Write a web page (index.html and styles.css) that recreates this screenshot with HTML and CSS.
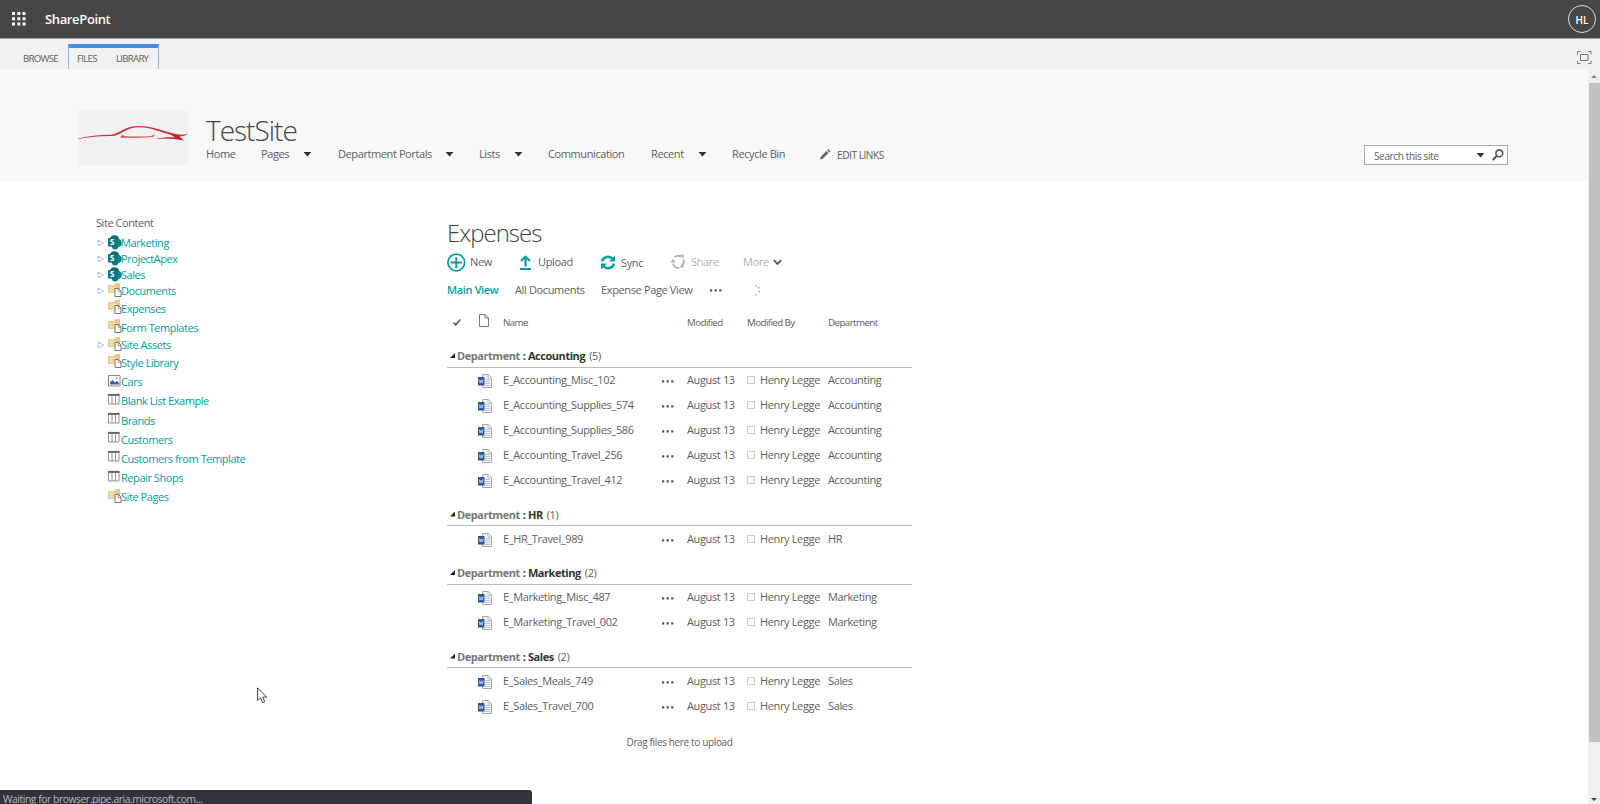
FILE: index.html
```html
<!DOCTYPE html>
<html lang="en">
<head>
    <meta charset="UTF-8">
    <meta name="viewport" content="width=device-width, initial-scale=1.0">
    <title>Expenses - TestSite</title>
    <link rel="stylesheet" href="styles.css">
</head>
<body>
    <!-- Shared icons -->
    <svg class="icon-defs" width="0" height="0">
        <symbol id="i-site" viewBox="0 0 14 15">
            <circle cx="6.500" cy="5" r="4.800" fill="#036c70"/>
            <circle cx="9.800" cy="8" r="4" fill="#078286"/>
            <circle cx="7" cy="11" r="3.400" fill="#067a7e"/>
            <rect x="0" y="3" width="8.500" height="8.500" rx="0.800" fill="#03787c"/>
            <text x="4.200" y="10.200" text-anchor="middle" font-size="8.500" font-weight="700" fill="#fff">S</text>
        </symbol>
        <symbol id="i-lib" viewBox="0 0 14 15">
            <path d="M0 2h6l1.500-2H12v10H0z" fill="#edc88c"/>
            <path d="M2.500 4h5v4h-5z" fill="#f0cf98" stroke="#f9ebd2" stroke-width=".8"/>
            <path d="M7 5.500h3.600L13 8v5.500H7z" fill="#fff" stroke="#777" stroke-width="1"/>
            <path d="M10.300 5.500v2.800H13" fill="none" stroke="#777" stroke-width=".8"/>
        </symbol>
        <symbol id="i-list" viewBox="0 0 14 15">
            <path d="M.5 1.500h10.500v9.500H.5zM4 3v8M7.500 3v8" fill="#fff" stroke="#888" stroke-width=".9"/>
            <path d="M0 1.900h11.500" stroke="#666" stroke-width="2"/>
        </symbol>
        <symbol id="i-pic" viewBox="0 0 14 15">
            <path d="M.5 1.500h11.500v10.500H.5z" fill="#fff" stroke="#888" stroke-width="1"/>
            <path d="M2 10.500V8l2.500-2L7 8.500 9 7l2 2v1.500z" fill="#2f659f"/>
            <circle cx="8.800" cy="4.300" r="1.100" fill="#eda04d"/>
        </symbol>
        <symbol id="i-word" viewBox="0 0 14 14">
            <path d="M4.500.5h6l3 3v10h-9z" fill="#f5f5f5" stroke="#a8a8a8" stroke-width="1"/>
            <path d="M10 .5v3.400h3.500" fill="#fff" stroke="#a8a8a8" stroke-width=".8"/>
            <path d="M7 5.500h5M7 7.500h5M7 9.500h5M7 11.500h5" stroke="#b0b4ba" stroke-width=".8"/>
            <path d="M0 3h6.500v8.500H0z" fill="#2b5797"/>
            <path d="M1.300 5.500l.8 3.600 1.100-3.200 1.100 3.200.8-3.600" fill="none" stroke="#c3d2e8" stroke-width=".9"/>
        </symbol>
        <symbol id="i-dots" viewBox="0 0 12 3">
            <path d="M0 .3h2.200v2.200H0zM4.600.3h2.200v2.200H4.600zM9.200.3h2.200v2.200H9.200z" fill="#555"/>
        </symbol>
    </svg>

    <header class="suite-bar">
        <svg class="waffle" width="14" height="14" viewBox="0 0 14 14" fill="#fff">
            <path d="M0 0h3v3H0zM5.300 0h3v3h-3zM10.600 0h3v3h-3zM0 5.300h3v3H0zM5.300 5.300h3v3h-3zM10.600 5.300h3v3h-3zM0 10.600h3v3H0zM5.300 10.600h3v3h-3zM10.600 10.600h3v3h-3z"/>
        </svg>
        <span class="suite-name">SharePoint</span>
        <span class="avatar">HL</span>
    </header>

    <div class="ribbon">
        <span class="tab browse">BROWSE</span>
        <div class="tab-group">
            <span class="tab files">FILES</span>
            <span class="tab library">LIBRARY</span>
        </div>
        <svg class="focus-icon" width="15" height="13" viewBox="0 0 15 13" fill="none" stroke="#777">
            <path d="M.5 3.500v-3h3M11 .5h3v3M14 9.500v3h-3M3.500 12.500h-3v-3M3.500 3.500h7.500v6H3.500z"/>
        </svg>
    </div>

    <div class="workspace">
        <div class="page">
            <div class="site-header">
                <svg class="logo" width="110" height="54" viewBox="0 0 110 54">
                    <defs>
                        <pattern id="checker" width="4" height="4" patternUnits="userSpaceOnUse">
                            <path d="M0 0h2v2H0zM2 2h2v2H2z" fill="#eeeeee"/>
                        </pattern>
                    </defs>
                    <rect width="110" height="54" fill="#f4f4f4"/>
                    <rect width="110" height="54" fill="url(#checker)"/>
                    <path d="M0 27.400C10 25 22 23.600 34 23.700 42 22 47 15 61 15c14 0 26 6 38 8.300 4 .7 7 .4 11-.8-3 2.300-6 3.200-9 3-16-2.500-26-9.300-40-9.300-12 0-17 7-26 8.900-13-.2-24 1-35 3z" fill="#c4323a"/>
                    <path d="M42 26.500l3-3 .6 1.700c10 .3 20 .5 27.400 0l4-2.200-2 3c-10 .9-22 .8-33 .5z" fill="#c9474c"/>
                    <path d="M77 28c8-1.800 14-2 20-1.400l-5-3.600 9 2 5 4.500-8-1.300c-7-1-13-1-21-.2z" fill="#c11f2a"/>
                </svg>
                <div class="site-info">
                    <h1>TestSite</h1>
                    <nav class="top-nav">
                        <a>Home</a>
                        <a>Pages</a><i class="caret"></i>
                        <a>Department Portals</a><i class="caret"></i>
                        <a>Lists</a><i class="caret"></i>
                        <a>Communication</a>
                        <a>Recent</a><i class="caret"></i>
                        <a>Recycle Bin</a>
                        <svg width="11" height="11" viewBox="0 0 11 11" fill="#666">
                            <path d="M0 10.500l.8-2.800L6.500 2l2 2-5.700 5.700zM7.200 1.300L8.400.200l2 2-1.200 1.200z"/>
                        </svg>
                        <a class="edit-links">EDIT LINKS</a>
                    </nav>
                </div>
                <div class="search">
                    <span>Search this site</span>
                    <i class="caret"></i>
                    <svg width="12" height="12" viewBox="0 0 12 12" fill="none" stroke="#555" stroke-width="1.600">
                        <circle cx="7.300" cy="4.300" r="3.400"/>
                        <path d="M4.800 6.800L.8 11" stroke-width="2"/>
                    </svg>
                </div>
            </div>

            <div class="content">
                <aside class="sidebar">
                    <div class="sidebar-title">Site Content</div>
                    <ul class="tree">
                        <li class="parent"><svg class="t-icon"><use href="#i-site"/></svg><a>Marketing</a></li>
                        <li class="parent"><svg class="t-icon"><use href="#i-site"/></svg><a>ProjectApex</a></li>
                        <li class="parent"><svg class="t-icon"><use href="#i-site"/></svg><a>Sales</a></li>
                        <li class="parent"><svg class="t-icon"><use href="#i-lib"/></svg><a>Documents</a></li>
                        <li><svg class="t-icon"><use href="#i-lib"/></svg><a>Expenses</a></li>
                        <li><svg class="t-icon"><use href="#i-lib"/></svg><a>Form Templates</a></li>
                        <li class="parent"><svg class="t-icon"><use href="#i-lib"/></svg><a>Site Assets</a></li>
                        <li><svg class="t-icon"><use href="#i-lib"/></svg><a>Style Library</a></li>
                        <li><svg class="t-icon"><use href="#i-pic"/></svg><a>Cars</a></li>
                        <li><svg class="t-icon"><use href="#i-list"/></svg><a>Blank List Example</a></li>
                        <li><svg class="t-icon"><use href="#i-list"/></svg><a>Brands</a></li>
                        <li><svg class="t-icon"><use href="#i-list"/></svg><a>Customers</a></li>
                        <li><svg class="t-icon"><use href="#i-list"/></svg><a>Customers from Template</a></li>
                        <li><svg class="t-icon"><use href="#i-list"/></svg><a>Repair Shops</a></li>
                        <li><svg class="t-icon"><use href="#i-lib"/></svg><a>Site Pages</a></li>
                    </ul>
                </aside>

                <main class="library-view">
                    <h2>Expenses</h2>
                    <div class="toolbar">
                        <svg width="19" height="19" viewBox="0 0 19 19" fill="none" stroke="#03a09c">
                            <circle cx="9.300" cy="9.500" r="8.400" stroke-width="1.700"/>
                            <path d="M9.300 4v11M3.800 9.500h11" stroke-width="2"/>
                        </svg>
                        <span>New</span>
                        <svg width="12" height="15" viewBox="0 0 12 15" fill="none" stroke="#03a09c" stroke-width="2.200">
                            <path d="M0 14h11M5.500 11.500V2M1 6l4.500-4.300L10 6"/>
                        </svg>
                        <span>Upload</span>
                        <svg width="15" height="15" viewBox="0 0 15 15" fill="none" stroke="#03a09c" stroke-width="2.500">
                            <path d="M1.200 6.500C2 1.200 9 .6 11.500 4M12.800 8.500C12 13.800 5 14.400 2.500 11"/>
                            <path d="M14 .5v6H8zM0 14.500v-6h6z" fill="#03a09c" stroke="none"/>
                        </svg>
                        <span class="low">Sync</span>
                        <svg width="16" height="16" viewBox="0 0 16 16" fill="none" stroke="#b8b8b8" stroke-width="2">
                            <path d="M4.500 3.200a6 6 0 0 1 6.500-.7M13.600 5.500a6 6 0 0 1-1.500 6M9.500 14a6 6 0 0 1-6.500-4.500"/>
                            <path d="M10 .3l4.300 1-1.300 4zM14 9.500l-.5 4.500-4-1zM.3 8.500l3-4 2.500 4z" fill="#b8b8b8" stroke="none"/>
                        </svg>
                        <span class="disabled">Share</span>
                        <span class="disabled">More</span>
                        <svg width="9" height="7" viewBox="0 0 9 7" fill="none" stroke="#555" stroke-width="1.800">
                            <path d="M.8 1.200l3.700 3.800 3.700-3.800"/>
                        </svg>
                    </div>
                    <div class="views">
                        <a class="active">Main View</a>
                        <a>All Documents</a>
                        <a>Expense Page View</a>
                        <svg class="dots"><use href="#i-dots"/></svg>
                        <svg width="6" height="11" viewBox="0 0 6 11" fill="#888">
                            <path d="M.5 0h1.200v1.200H.5zM3 2h1.300v1.300H3zM3.500 6h1.300v1.300H3.500zM.5 9.500h1.200v1.200H.5z"/>
                        </svg>
                    </div>

                    <div class="row columns">
                        <svg class="check" width="8" height="7" viewBox="0 0 8 7" fill="none" stroke="#555" stroke-width="1.500">
                            <path d="M.6 3.600l2.200 2.200L7.300.6"/>
                        </svg>
                        <svg class="page-icon" width="10" height="13" viewBox="0 0 10 13" fill="none" stroke="#777">
                            <path d="M.5.5h5.500l3.500 3.500v8.500h-9zM6 .5v3.500h3.500"/>
                        </svg>
                        <span>Name</span><span></span><span>Modified</span><span>Modified By</span><span>Department</span>
                    </div>

                    <div class="group"><i class="corner"></i><b>Department</b><strong>: Accounting</strong><span>(5)</span></div>
                    <div class="row"><i></i><svg class="word"><use href="#i-word"/></svg><a>E_Accounting_Misc_102</a><svg class="dots"><use href="#i-dots"/></svg><span>August 13</span><span class="person">Henry Legge</span><span>Accounting</span></div>
                    <div class="row"><i></i><svg class="word"><use href="#i-word"/></svg><a>E_Accounting_Supplies_574</a><svg class="dots"><use href="#i-dots"/></svg><span>August 13</span><span class="person">Henry Legge</span><span>Accounting</span></div>
                    <div class="row"><i></i><svg class="word"><use href="#i-word"/></svg><a>E_Accounting_Supplies_586</a><svg class="dots"><use href="#i-dots"/></svg><span>August 13</span><span class="person">Henry Legge</span><span>Accounting</span></div>
                    <div class="row"><i></i><svg class="word"><use href="#i-word"/></svg><a>E_Accounting_Travel_256</a><svg class="dots"><use href="#i-dots"/></svg><span>August 13</span><span class="person">Henry Legge</span><span>Accounting</span></div>
                    <div class="row"><i></i><svg class="word"><use href="#i-word"/></svg><a>E_Accounting_Travel_412</a><svg class="dots"><use href="#i-dots"/></svg><span>August 13</span><span class="person">Henry Legge</span><span>Accounting</span></div>

                    <div class="group"><i class="corner"></i><b>Department</b><strong>: HR</strong><span>(1)</span></div>
                    <div class="row"><i></i><svg class="word"><use href="#i-word"/></svg><a>E_HR_Travel_989</a><svg class="dots"><use href="#i-dots"/></svg><span>August 13</span><span class="person">Henry Legge</span><span>HR</span></div>

                    <div class="group"><i class="corner"></i><b>Department</b><strong>: Marketing</strong><span>(2)</span></div>
                    <div class="row"><i></i><svg class="word"><use href="#i-word"/></svg><a>E_Marketing_Misc_487</a><svg class="dots"><use href="#i-dots"/></svg><span>August 13</span><span class="person">Henry Legge</span><span>Marketing</span></div>
                    <div class="row"><i></i><svg class="word"><use href="#i-word"/></svg><a>E_Marketing_Travel_002</a><svg class="dots"><use href="#i-dots"/></svg><span>August 13</span><span class="person">Henry Legge</span><span>Marketing</span></div>

                    <div class="group"><i class="corner"></i><b>Department</b><strong>: Sales</strong><span>(2)</span></div>
                    <div class="row"><i></i><svg class="word"><use href="#i-word"/></svg><a>E_Sales_Meals_749</a><svg class="dots"><use href="#i-dots"/></svg><span>August 13</span><span class="person">Henry Legge</span><span>Sales</span></div>
                    <div class="row"><i></i><svg class="word"><use href="#i-word"/></svg><a>E_Sales_Travel_700</a><svg class="dots"><use href="#i-dots"/></svg><span>August 13</span><span class="person">Henry Legge</span><span>Sales</span></div>

                    <p class="drop-hint">Drag files here to upload</p>
                </main>
            </div>
        </div>

        <div class="scrollbar">
            <i class="arrow-up"></i>
            <div class="thumb"></div>
            <i class="arrow-down"></i>
        </div>
    </div>

    <svg class="cursor" width="12" height="17" viewBox="0 0 12 17" fill="#fff" stroke="#444">
        <path d="M.6 1v12.500l3-2.700 2 4.900 2.200-.9-2-4.700h4z"/>
    </svg>
    <div class="status">Waiting for browser.pipe.aria.microsoft.com...</div>
</body>
</html>
```
FILE: styles.css
```css
* {
    margin: 0;
    padding: 0;
    box-sizing: border-box;
}

body {
    font-family: 'Open Sans', 'Noto Sans', sans-serif;
    font-size: 11px;
    letter-spacing: -0.36px;
    line-height: 16px;
    height: 804px;
    background: #fff;
    color: #606060;
    overflow: hidden;
    display: flex;
    flex-direction: column;
    white-space: nowrap;
}

svg {
    display: block;
}

.icon-defs {
    display: none;
}

/* Suite bar */
.suite-bar {
    height: 39px;
    background: #484644;
    border-bottom: 1px solid #a8a09c;
    display: flex;
    align-items: center;
    padding: 0 4px 0 12px;
}

.suite-name {
    margin-left: 19px;
    padding-bottom: 1px;
    color: #fff;
    font-size: 13px;
    font-weight: 600;
}

.avatar {
    margin-left: auto;
    width: 28px;
    height: 28px;
    border: 1px solid #ddd;
    border-radius: 50%;
    color: #fff;
    font-weight: 600;
    font-size: 10px;
    letter-spacing: 0;
    line-height: 29px;
    text-align: center;
}

/* Ribbon */
.ribbon {
    height: 30px;
    background: #f1f1f1;
    display: flex;
    padding: 5px 8px 0 23px;
}

.tab {
    font-size: 9.7px;
    letter-spacing: -0.75px;
    line-height: 29px;
}

.browse {
    width: 45px;
}

.tab-group {
    width: 91px;
    border: 1px solid #8db9ee;
    border-top: 4px solid #4a8de0;
    border-bottom: none;
    display: flex;
    padding-left: 8px;
}

.tab-group .tab {
    line-height: 21px;
}

.files {
    width: 39px;
}

.focus-icon {
    margin: 7px 0 0 auto;
}

/* Page and scrollbar */
.workspace {
    flex: 1;
    display: flex;
    min-height: 0;
}

.page {
    flex: 1;
}

.scrollbar {
    width: 12px;
    background: #f0f0f0;
    display: flex;
    flex-direction: column;
    align-items: center;
}

.arrow-up {
    margin: 6px 0 5px;
    border: 3px solid transparent;
    border-top: none;
    border-bottom: 3px solid #888;
}

.thumb {
    width: 11px;
    height: 659px;
    margin-left: 1px;
    background: #c1c1c1;
}

.arrow-down {
    margin-top: auto;
    margin-bottom: 3px;
    border: 3px solid transparent;
    border-bottom: none;
    border-top: 3px solid #444;
}

/* Site header */
.site-header {
    height: 112px;
    background: #f8f8f8;
    display: flex;
    padding: 42px 80px 0 78px;
}

.site-info {
    margin-left: 18px;
}

h1,
h2 {
    font-weight: 300;
    color: #444;
    letter-spacing: -1px;
}

h1 {
    font-size: 28px;
    line-height: 38px;
    margin-bottom: -4px;
}

.top-nav {
    display: grid;
    grid-template-columns: 55px 43px 34px 108px 33px 36px 33px 103px 48px 33px 88px 17px 60px;
    align-items: center;
    line-height: 16px;
    letter-spacing: -0.4px;
}

.edit-links {
    font-size: 10.2px;
    letter-spacing: -0.5px;
    padding-top: 2px;
}

.caret {
    width: 7px;
    height: 5px;
    background: #333;
    clip-path: polygon(0 0, 100% 0, 100% 20%, 50% 100%, 0 20%);
}

.search {
    margin: 34px 0 0 auto;
    width: 144px;
    height: 20px;
    border: 1px solid #aaa;
    background: #fff;
    display: flex;
    align-items: center;
    padding: 0 3px 0 9px;
    font-size: 10px;
}

.search span {
    flex: 1;
    padding-top: 2px;
}

.search svg {
    margin-left: 8px;
}

/* Content area */
.content {
    display: flex;
    padding-left: 96px;
}

.sidebar {
    width: 351px;
    padding-top: 34px;
    letter-spacing: -0.44px;
}

.sidebar-title {
    line-height: 16px;
    margin-bottom: 4px;
}

.tree {
    list-style: none;
}

.tree li {
    height: 19.2px;
    display: flex;
    align-items: center;
    padding-left: 12px;
    color: #03a09c;
}

.tree .parent {
    height: 16px;
    padding-left: 0;
}

.parent::before {
    content: '\25B7';
    flex: none;
    width: 10px;
    padding-left: 2px;
    color: #888;
    font-family: 'DejaVu Sans', sans-serif;
    font-size: 8px;
}

.t-icon {
    width: 14px;
    height: 15px;
    margin: -2px -1px 0 0;
    letter-spacing: 0;
    overflow: visible;
}

/* Library */
.library-view {
    width: 465px;
    padding-top: 34px;
}

h2 {
    font-size: 24px;
    line-height: 36px;
}

.toolbar {
    display: grid;
    grid-template-columns: 23px 50px 18px 63px 20px 49px 21px 52px 30px 9px;
    align-items: center;
    height: 22px;
}

.toolbar .low {
    padding-top: 2px;
}

.disabled {
    color: #b1b1b1;
}

.views {
    display: grid;
    grid-template-columns: 68px 86px 109px 45px 6px;
    align-items: center;
    height: 34px;
    margin-bottom: 3px;
}

.active {
    color: #03a09c;
    font-weight: 600;
}

.dots {
    width: 12px;
    height: 3px;
}

.row {
    display: grid;
    grid-template-columns: 31px 25px 159px 25px 60px 81px 84px;
    align-items: center;
    height: 25px;
}

.row .dots {
    margin-top: 3px;
}

.columns {
    font-size: 9.8px;
    letter-spacing: -0.6px;
    margin-bottom: -1px;
}

.check {
    margin-left: 6px;
}

.page-icon {
    margin: -4px 0 0 1px;
}

.word {
    width: 14px;
    height: 14px;
    margin-top: 2px;
}

.person {
    display: flex;
    align-items: center;
}

.person::before {
    content: '';
    flex: none;
    width: 6px;
    height: 6px;
    margin-right: 5px;
    border: 1px solid #ccc;
}

.group {
    height: 33.5px;
    border-bottom: 1px solid #bbb;
    padding: 14px 0 0 3px;
    display: flex;
}

.group b {
    color: #777;
}

.group strong {
    color: #333;
    margin: 0 4px 0 3px;
}

.group b,
.group strong {
    letter-spacing: -0.45px;
}

.corner {
    width: 5px;
    height: 5px;
    margin: 5px 2px 0 0;
    background: #222;
    clip-path: polygon(100% 0, 100% 100%, 0 100%);
}

.drop-hint {
    font-size: 10px;
    text-align: center;
    margin-top: 16px;
}

/* Pointer and browser status bubble lie over the page */
.cursor {
    position: absolute;
    left: 257px;
    top: 687px;
}

.status {
    position: absolute;
    left: 0;
    bottom: 0;
    width: 532px;
    height: 14px;
    padding-left: 3px;
    background: #323337;
    border-top-right-radius: 3px;
    color: #b8babd;
    font-size: 10.3px;
    letter-spacing: -0.43px;
    line-height: 18px;
}
```
